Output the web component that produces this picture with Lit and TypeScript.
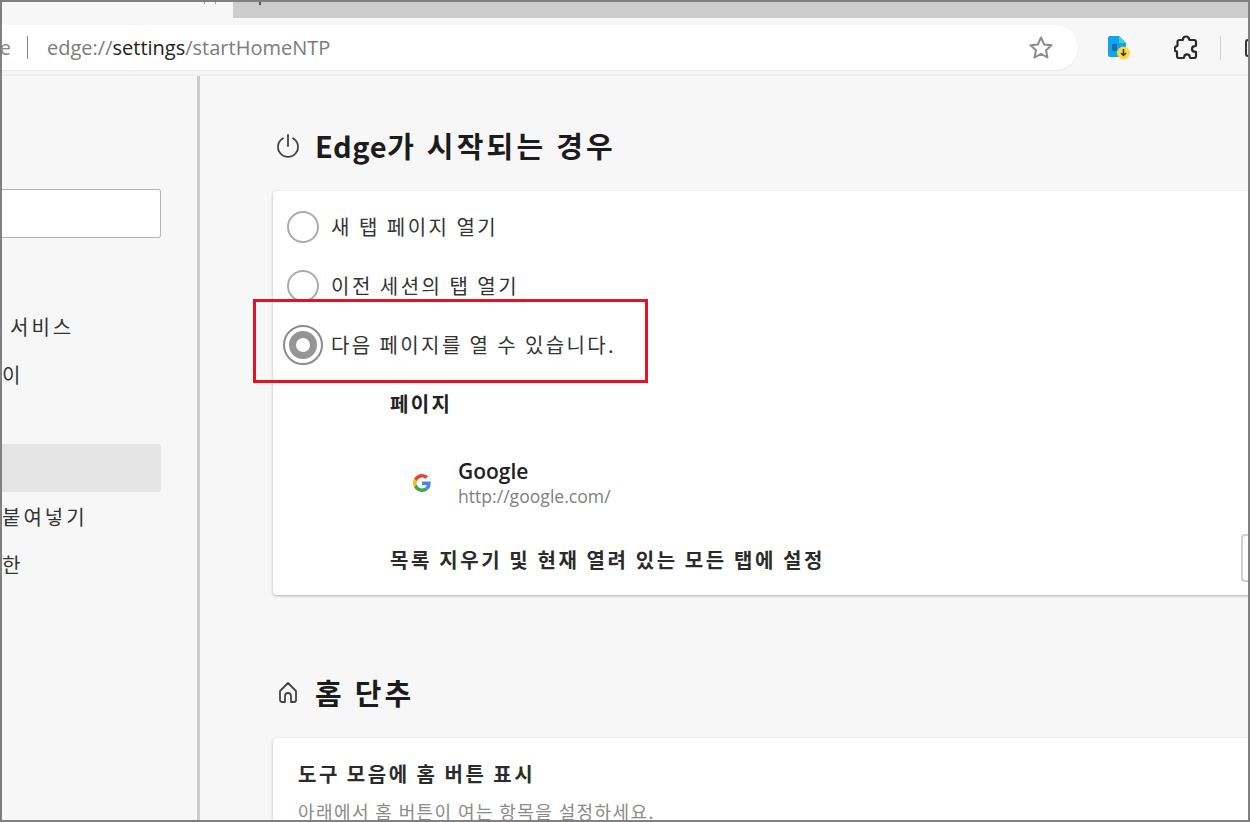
import { LitElement, html, css } from "lit";
import { customElement } from "lit/decorators.js";

@customElement("app-root")
export class AppRoot extends LitElement {
  static styles = css`
    :host { display: block; width: 1250px; height: 822px; overflow: hidden; }
    * { box-sizing: border-box; }
    .frame {
      width: 1250px; height: 822px; overflow: hidden; position: relative;
      display: flex; flex-direction: column; background: #f7f7f7;
      font-family: "Noto Sans CJK KR", "Noto Sans", sans-serif; color: #222;
      border: solid #808080; border-width: 2px 2px 2px 2px;
    }
    .tabs { height: 16px; flex: none; display: flex; background: #cccccc; }
    .tab-active { width: 231px; background: #f7f7f7; position: relative; }
    .tab-rest { flex: 1; background: #cccccc; border-bottom-left-radius: 4px; padding-left: 24px; }
    .tab-mark { display: block; width: 2px; height: 3px; background: #555; margin-left: 2px; }
    .tab-active-end { display: block; margin-left: 202px; width: 12px; height: 2px; border-left: 1px solid #999; border-right: 1px solid #999; }
    .toolbar { height: 58px; flex: none; background: #f7f7f7; border-bottom: 2px solid #efefef; display: flex; align-items: flex-start; padding-top: 7px; }
    .omni {
      width: 1076px; height: 45px; background: #fff; border-radius: 0 23px 23px 0; flex: none;
      display: flex; align-items: center; box-shadow: 0 1px 2px rgba(0,0,0,.06); font-size: 20px; color: #777;
      font-family: "Open Sans", "Noto Sans", sans-serif; overflow: hidden;
    }
    .omni-e { width: 9px; overflow: hidden; direction: rtl; flex: none; color: #888; }
    .omni-sep { width: 1px; height: 23px; background: #888; margin: 0 19px 0 16px; flex: none; }
    .url { font-size: 20px; color: #7c7c7c; white-space: nowrap; }
    .url b { font-weight: 400; color: #222; }
    .star { margin-left: auto; margin-right: 24px; display: block; }
    .tools { flex: 1; display: flex; align-items: center; height: 45px; position: relative; }
    .t1 { margin-left: 29px; display: block; flex: none; }
    .t2 { margin-left: 43px; display: block; flex: none; }
    .tsep { width: 1px; height: 24px; background: #d0d0d0; margin-left: 22px; flex: none; }
    .t3 { width: 10px; height: 18px; margin-left: 24px; border: 2px solid #333; border-right: 0; border-radius: 3px 0 0 3px; flex: none; }
    .body { flex: 1; display: flex; min-height: 0; }
    .side { width: 198px; flex: none; border-right: 3px solid #cccccc; padding-top: 113px; overflow: hidden; }
    .search { width: 159px; height: 49px; background: #fff; border: 1px solid #b3b3b3; border-left: 0; border-radius: 0 3px 3px 0; }
    .nav { margin-top: 62px; display: flex; flex-direction: column; font-size: 20px; color: #333; width: 159px; letter-spacing: 3px; }
    .nav div { height: 48px; display: flex; align-items: center; white-space: nowrap; }
    .sel { background: #e5e5e5; border-radius: 0 3px 3px 0; }
    .nav .i1 { padding: 4px 0 0 8px; }
    .nav .i2 { padding-top: 4px; }
    .main { flex: 1; padding: 47px 0 0 73px; min-width: 0; overflow: hidden; }
    .h { display: flex; align-items: center; height: 44px; font-size: 29px; font-weight: 700; color: #1c1c1c; gap: 14px; white-space: nowrap; letter-spacing: 3.2px; padding-left: 2px; }
    .h svg { flex: none; display: block; }
    .lat { letter-spacing: 0.6px; }
    .card { width: 1000px; background: #fff; border-radius: 4px; box-shadow: 0 1px 3px rgba(0,0,0,.28); }
    .c1 { height: 404px; margin-top: 24px; padding-top: 6px; }
    .opt { height: 59px; display: flex; align-items: center; padding-left: 14px; gap: 12px; font-size: 20px; color: #333; letter-spacing: 2.5px; white-space: nowrap; }
    .opt-s { letter-spacing: 2.4px; }
    .radio { width: 32px; height: 32px; border-radius: 50%; border: 2px solid #aaa; flex: none; background: #fff; }
    .on { width: 40px; height: 40px; margin-left: -4px; margin-right: -4px; border: 2px solid #8c8c8c; padding: 4px; }
    .on span { display: block; width: 28px; height: 28px; border-radius: 50%; border: 7px solid #959595; background: #fff; }
    .pg { margin: 14px 0 0 117px; font-size: 20px; font-weight: 700; height: 30px; display: flex; align-items: center; color: #222; letter-spacing: 2.3px; }
    .entry { display: flex; margin: 40px 0 0 140px; align-items: center; gap: 27px; }
    .entry-t { display: flex; flex-direction: column; font-family: "Open Sans", sans-serif; }
    .en { font-size: 21px; font-weight: 600; color: #222; line-height: 26px; }
    .eu { font-size: 17.6px; color: #808080; line-height: 24px; }
    .clr { margin: 36px 0 0 117px; height: 30px; font-size: 20px; font-weight: 700; display: flex; align-items: center; letter-spacing: 2.6px; white-space: nowrap; color: #2b2b2b; }
    .btn { position: absolute; left: 1239px; top: 532px; width: 20px; height: 48px; border: 2px solid #d0d0d0; border-radius: 4px; background: #fff; }
    .h2 { margin-top: 75px; }
    .c2 { height: 120px; margin-top: 24px; padding: 20px 0 0 25px; }
    .c2t { font-size: 20px; font-weight: 700; letter-spacing: 2.5px; height: 30px; display: flex; align-items: center; color: #2b2b2b; }
    .c2s { font-size: 18px; color: #8a8a8a; margin-top: 10px; letter-spacing: 1.4px; white-space: nowrap; line-height: 26px; }
    .red { position: absolute; left: 251px; top: 297px; width: 395px; height: 84px; border: 3px solid #e81123; pointer-events: none; }
  `;

  render() {
    return html`
      <div class="frame">
        <div class="tabs">
          <div class="tab-active"><span class="tab-active-end"></span></div>
          <div class="tab-rest"><span class="tab-mark"></span></div>
        </div>
        <div class="toolbar">
          <div class="omni">
            <span class="omni-e">e</span>
            <span class="omni-sep"></span>
            <span class="url">edge://<b>settings</b>/startHomeNTP</span>
            <svg class="star" width="26" height="26" viewBox="0 0 26 26" fill="none" stroke="#8a8a8a" stroke-width="2" stroke-linejoin="round">
              <path d="M13 2.5l3.1 6.9 7.4.8-5.5 5 1.5 7.3L13 18.8l-6.5 3.7L8 15.2l-5.500-5 7.400-.8z"/>
            </svg>
          </div>
          <div class="tools">
            <svg class="t1" width="24" height="26" viewBox="0 0 24 26">
              <path d="M1 3a2 2 0 0 1 2-2h9l7 7v12a2 2 0 0 1-2 2H3a2 2 0 0 1-2-2z" fill="#10a5e8"/>
              <path d="M12 1l7 7h-7z" fill="#33d6d0"/>
              <rect x="5" y="9" width="5" height="7" fill="#1b6fa8"/>
              <circle cx="16.500" cy="18" r="6.500" fill="#ffd83b"/>
              <path d="M16.500 14v6M14 18l2.500 2.500L19 18" stroke="#333" stroke-width="1.500" fill="none"/>
            </svg>
            <svg class="t2" width="24" height="26" viewBox="0 0 24 26" fill="none" stroke="#2a2a2a" stroke-width="2.200" stroke-linejoin="round">
              <path d="M9 4.500C9 2.500 10.500 1.500 12 1.500s3 1 3 2.800c0 .5.200.7.700.7H20a2 2 0 0 1 2 2v3.500c0 .6-.4.700-1 .7-1.900 0-3 1.200-3 2.700s1.100 2.800 3 2.800c.6 0 1 .2 1 .8V21a2 2 0 0 1-2 2h-3.500c-.6 0-.7-.5-.7-1 0-1.600-1.300-2.700-2.800-2.700s-2.800 1.100-2.800 2.700c0 .5-.2 1-.7 1H5a2 2 0 0 1-2-2v-4c0-.5-.4-.8-1-.8-1-.2-1.500-1.200-1.300-2.400.2-1.700 1-2.700 2.300-2.700.5 0 .5-.4.500-.8V7a2 2 0 0 1 2-2h3c.4 0 .500-.2.500-.5z"/>
            </svg>
            <span class="tsep"></span>
            <span class="t3"></span>
          </div>
        </div>
        <div class="body">
          <div class="side">
            <div class="search"></div>
            <div class="nav">
              <div class="i1">서비스</div>
              <div class="i2">이</div>
              <div></div>
              <div class="sel"></div>
              <div>붙여넣기</div>
              <div>한</div>
            </div>
          </div>
          <div class="main">
            <div class="h">
              <svg width="26" height="26" viewBox="0 0 26 26" fill="none" stroke="#444" stroke-width="1.800" stroke-linecap="round">
                <path d="M13 3v11M8 6.200a10 10 0 1 0 10 0"/>
              </svg>
              <span><span class="lat">Edge</span>가 시작되는 경우</span>
            </div>
            <div class="card c1">
              <div class="opt"><span class="radio"></span>새 탭 페이지 열기</div>
              <div class="opt"><span class="radio"></span>이전 세션의 탭 열기</div>
              <div class="opt opt-s"><span class="radio on"><span></span></span>다음 페이지를 열 수 있습니다.</div>
              <div class="pg">페이지</div>
              <div class="entry">
                <svg width="18" height="18" viewBox="0 0 48 48">
                  <path fill="#EA4335" d="M24 9.500c3.500 0 6.700 1.200 9.200 3.600l6.900-6.900C35.900 2.400 30.500 0 24 0 14.600 0 6.500 5.400 2.600 13.200l8 6.200C12.400 13.700 17.700 9.500 24 9.500z"/>
                  <path fill="#4285F4" d="M47 24.500c0-1.600-.1-3.100-.4-4.500H24v9h12.900c-.6 3-2.200 5.500-4.700 7.200l7.700 6C44.400 38 47 31.800 47 24.500z"/>
                  <path fill="#FBBC05" d="M10.500 28.600a14.500 14.500 0 0 1 0-9.200l-8-6.200a24 24 0 0 0 0 21.600z"/>
                  <path fill="#34A853" d="M24 48c6.500 0 11.900-2.100 15.900-5.800l-7.700-6c-2.200 1.500-4.900 2.300-8.200 2.300-6.300 0-11.600-4.200-13.500-9.900l-8 6.200C6.500 42.600 14.600 48 24 48z"/>
                </svg>
                <div class="entry-t">
                  <span class="en">Google</span>
                  <span class="eu">http://google.com/</span>
                </div>
              </div>
              <div class="clr">목록 지우기 및 현재 열려 있는 모든 탭에 설정</div>
            </div>
            <div class="h h2">
              <svg width="26" height="26" viewBox="0 0 26 26" fill="none" stroke="#444" stroke-width="1.800" stroke-linejoin="round">
                <path d="M5 12l8-8 8 8v9a2 2 0 0 1-2 2h-3v-6a3 3 0 0 0-6 0v6H7a2 2 0 0 1-2-2z"/>
              </svg>
              <span>홈 단추</span>
            </div>
            <div class="card c2">
              <div class="c2t">도구 모음에 홈 버튼 표시</div>
              <div class="c2s">아래에서 홈 버튼이 여는 항목을 설정하세요.</div>
            </div>
          </div>
        </div>
        <div class="btn"></div>
        <div class="red"></div>
      </div>
    `;
  }
}
